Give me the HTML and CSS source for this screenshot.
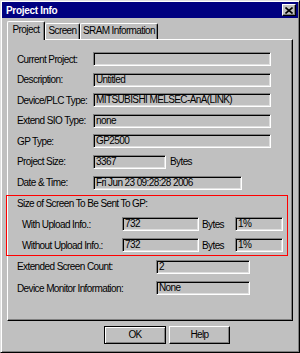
FILE: index.html
```html
<!DOCTYPE html>
<html>
  <head>
    <meta charset="UTF-8">
    <title>Project Info</title>
    <link rel="stylesheet" href="styles.css">
  </head>
  <body>
    <div class="window">
      <div class="titlebar">
        <span class="title">Project Info</span>
        <span class="close">
          <svg width="8" height="7" viewBox="0 0 8 7">
            <path d="M0.5 0.5 L7.5 6.5 M7.5 0.5 L0.5 6.5" stroke="#000" stroke-width="1.6" fill="none"/>
          </svg>
        </span>
      </div>

      <div class="tabs">
        <div class="tab active tab-project">Project</div>
        <div class="tab tab-screen">Screen</div>
        <div class="tab tab-sram">SRAM Information</div>
      </div>

      <div class="panel">
        <div class="row">
          <span class="label">Current Project:</span>
          <span class="field wide"></span>
        </div>
        <div class="row">
          <span class="label">Description:</span>
          <span class="field wide">Untitled</span>
        </div>
        <div class="row">
          <span class="label">Device/PLC Type:</span>
          <span class="field wide">MITSUBISHI MELSEC-AnA(LINK)</span>
        </div>
        <div class="row">
          <span class="label">Extend SIO Type:</span>
          <span class="field wide">none</span>
        </div>
        <div class="row">
          <span class="label">GP Type:</span>
          <span class="field wide">GP2500</span>
        </div>
        <div class="row">
          <span class="label">Project Size:</span>
          <span class="field size">3367</span>
          <span class="unit">Bytes</span>
        </div>
        <div class="row">
          <span class="label">Date &amp; Time:</span>
          <span class="field date">Fri Jun 23 09:28:28 2006</span>
        </div>

        <!-- highlighted group -->
        <div class="sendsize">
          <div class="heading">Size of Screen To Be Sent To GP:</div>
          <div class="row sub">
            <span class="label">With Upload Info.:</span>
            <span class="field bytes">732</span>
            <span class="unit">Bytes</span>
            <span class="field pct">1%</span>
          </div>
          <div class="row sub">
            <span class="label">Without Upload Info.:</span>
            <span class="field bytes">732</span>
            <span class="unit">Bytes</span>
            <span class="field pct">1%</span>
          </div>
        </div>

        <div class="row extra first">
          <span class="label">Extended Screen Count:</span>
          <span class="field count">2</span>
        </div>
        <div class="row extra">
          <span class="label">Device Monitor Information:</span>
          <span class="field count">None</span>
        </div>
      </div>

      <div class="buttons">
        <div class="btn default">OK</div>
        <div class="btn">Help</div>
      </div>
    </div>
  </body>
</html>
```

FILE: styles.css
```css
/* Classic dialog look */
body {
  margin: 0;
  font-family: 'Liberation Sans', Arial, sans-serif;
  font-size: 10px;
  letter-spacing: -0.6px;
  color: #000;
  background-color: #c0c0c0;
}

.window {
  width: 300px;
  height: 353px;
  box-sizing: border-box;
  background-color: #c0c0c0;
  border: 1px solid;
  border-color: #dfdfdf #000 #000 #dfdfdf;
  box-shadow: inset 1px 1px #fff, inset -1px -1px #808080;
  padding: 1px;
}

/* Title bar */
.titlebar {
  height: 16px;
  background-color: #000080;
  display: flex;
  align-items: center;
  justify-content: space-between;
  padding: 0 2px 0 4px;
}

.title {
  color: #fff;
  font-weight: bold;
  letter-spacing: -0.3px;
}

.close {
  width: 14px;
  height: 12px;
  box-sizing: border-box;
  background-color: #c0c0c0;
  border: 1px solid;
  border-color: #fff #000 #000 #fff;
  box-shadow: inset -1px -1px #808080;
  display: flex;
  align-items: center;
  justify-content: center;
}

.close svg {
  display: block;
}

/* Tabs */
.tabs {
  display: flex;
  align-items: flex-end;
  margin-top: 3px;
  padding-left: 5px;
  height: 18px;
}

.tab {
  height: 16px;
  box-sizing: border-box;
  border: 1px solid;
  border-color: #fff #000 transparent #fff;
  border-bottom: none;
  box-shadow: inset -1px 0 #808080;
  border-radius: 2px 2px 0 0;
  text-align: center;
  line-height: 14px;
}

.tab.active {
  height: 19px;
  margin-bottom: -1px;
  position: relative;
  z-index: 1;
  background-color: #c0c0c0;
  line-height: 16px;
}

.tab-project { width: 38px; }
.tab-screen { width: 35px; }
.tab-sram { width: 78px; }

/* Tab page */
.panel {
  margin: 0 5px;
  height: 282px;
  box-sizing: border-box;
  border: 1px solid;
  border-color: #fff #000 #000 #fff;
  box-shadow: inset -1px -1px #808080;
  padding: 12px 0 0 9px;
  display: flex;
  flex-direction: column;
  gap: 6.6px;
}

.row {
  display: flex;
  align-items: center;
  height: 14px;
}

.label {
  width: 76px;
  flex-shrink: 0;
  white-space: nowrap;
}

.field {
  height: 14px;
  box-sizing: border-box;
  border: 1px solid;
  border-color: #808080 #fff #fff #808080;
  box-shadow: inset 1px 1px #000, inset -1px -1px #dfdfdf;
  padding: 0 2px;
  line-height: 12px;
  white-space: nowrap;
  overflow: hidden;
}

.wide { width: 178px; }
.size { width: 73px; }
.date { width: 149px; }

.unit {
  margin-left: 4px;
}

/* Red annotation box */
.sendsize {
  margin: -1px 0 0 -11px;
  width: 282px;
  height: 61px;
  box-sizing: border-box;
  border: 1px solid #ff0000;
  padding: 2px 0 0 10px;
  display: flex;
  flex-direction: column;
  gap: 7px;
}

.heading {
  height: 12px;
  line-height: 12px;
}

.sub {
  padding-left: 5px;
}

.sub .label {
  width: 100px;
}

.bytes { width: 77px; }

.sub .unit {
  width: 33px;
  margin-left: 3px;
}

.pct { width: 48px; }

.extra .label {
  width: 139px;
}

.extra.first {
  margin-top: -3px;
}

.extra + .extra {
  margin-top: 1px;
}

.count { width: 94px; }

/* Buttons */
.buttons {
  display: flex;
  gap: 3px;
  margin: 5px 0 0 102px;
}

.btn {
  width: 61px;
  height: 18px;
  box-sizing: border-box;
  border: 1px solid;
  border-color: #fff #000 #000 #fff;
  box-shadow: inset -1px -1px #808080;
  text-align: center;
  line-height: 15px;
}

.btn.default {
  width: 62px;
  border-color: #000;
  box-shadow: inset 1px 1px #fff, inset -1px -1px #808080;
}
```
